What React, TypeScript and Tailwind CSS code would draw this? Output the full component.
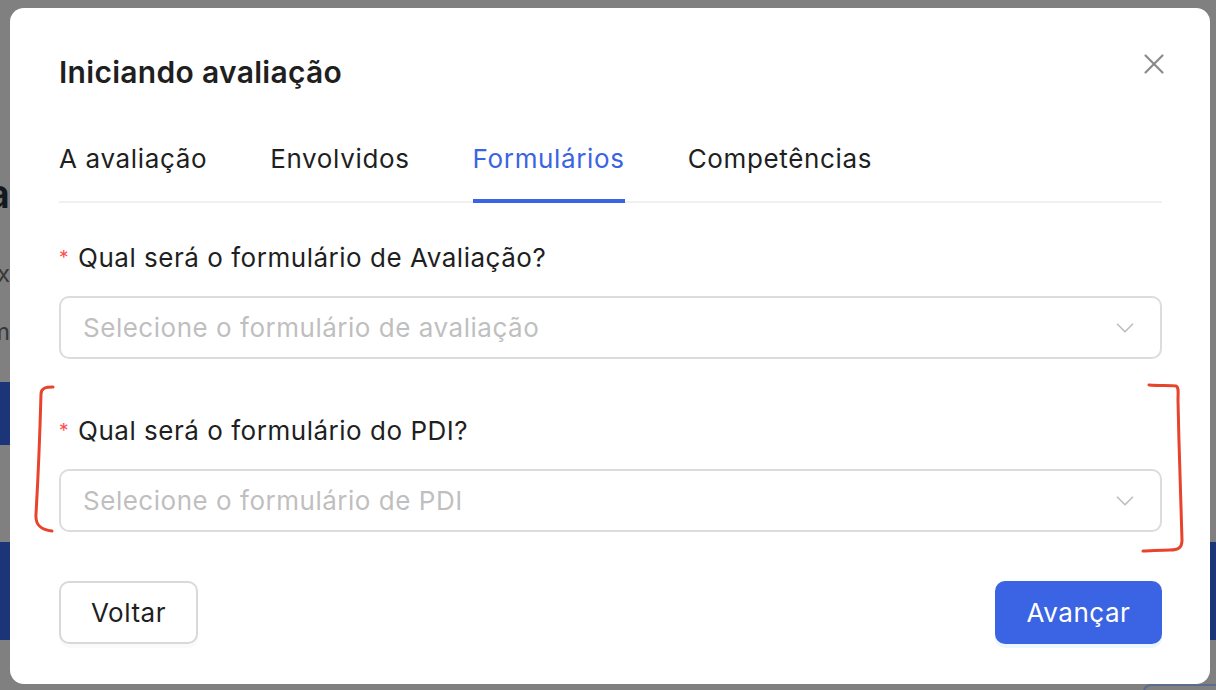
import { X, ChevronDown } from 'lucide-react';

const tabs = ['A avaliação', 'Envolvidos', 'Formulários', 'Competências'];

const Field = ({ label, placeholder }: { label: string; placeholder: string }) => (
  <div className="flex flex-col">
    <label className="flex items-center text-[26px] leading-[32px] tracking-[0.02em] text-[#1f1f1f]">
      <span className="mr-[9px] text-[19px] text-[#ff4d4f]">*</span>
      {label}
    </label>
    <div className="mt-[22px] flex h-[63px] items-center justify-between rounded-[10px] border-2 border-[#dcdcdc] pl-[22px] pr-[20px]">
      <span className="text-[26px] tracking-[0.02em] text-[#bfbfbf]">{placeholder}</span>
      <ChevronDown className="h-[30px] w-[30px] text-[#bfbfbf]" strokeWidth={1.4} />
    </div>
  </div>
);

const App = () => {
  return (
    <div
      className="relative h-[690px] w-[1216px] overflow-hidden bg-[#808080]"
      style={{ fontFamily: 'Inter, "Noto Sans", sans-serif' }}
    >
      {/* page behind the overlay */}
      <div className="flex h-full flex-col">
        <div className="flex h-[44px] w-[10px] shrink-0 justify-end overflow-hidden mt-[172px]">
          <span className="whitespace-nowrap text-[40px] font-semibold leading-[44px] text-[#141821]">Sistema</span>
        </div>
        <div className="mt-[42px] flex h-[32px] w-[10px] shrink-0 justify-end overflow-hidden">
          <span className="whitespace-nowrap text-[24px] leading-[32px] text-[#383838]">Prefix</span>
        </div>
        <div className="mt-[26px] flex h-[32px] w-[10px] shrink-0 justify-end overflow-hidden">
          <span className="whitespace-nowrap text-[24px] leading-[32px] text-[#383838]">Em</span>
        </div>
        <div className="mt-[34px] h-[63px] w-[600px] shrink-0 bg-[#1c3478]" />
        <div className="mt-[97px] h-[98px] w-full shrink-0 bg-[#1c3478]" />
        <div className="mt-[44px] flex shrink-0 justify-end">
          <div className="h-[20px] w-[73px] rounded-tl-[8px] border-l-2 border-t-2 border-[#5a6c90]" />
        </div>
      </div>

      {/* modal */}
      <div className="absolute left-[10px] top-[8px] flex h-[676px] w-[1200px] flex-col rounded-[14px] bg-white pl-[49px] pr-[48px] pt-[46px]">
        <div className="flex h-[36px] items-center justify-between">
          <h1 className="text-[30px] font-semibold leading-[36px] tracking-[0.01em] text-[#1f1f1f]">Iniciando avaliação</h1>
          <X className="-mr-[9px] -mt-[16px] h-[34px] w-[34px] text-[#8a8a8a]" strokeWidth={1.5} />
        </div>

        <div className="mt-[53px] flex gap-[63px] border-b-2 border-[#f0f0f0]">
          {tabs.map((t, i) => (
            <div
              key={t}
              className={
                i === 2
                  ? '-mb-[2px] border-b-4 border-[#3b64e2] pb-[24px] text-[26px] leading-[32px] tracking-[0.025em] text-[#3b64e2]'
                  : '-mb-[2px] border-b-4 border-transparent pb-[24px] text-[26px] leading-[32px] tracking-[0.025em] text-[#1f1f1f]'
              }
            >
              {t}
            </div>
          ))}
        </div>

        <div className="mt-[39px]">
          <Field label="Qual será o formulário de Avaliação?" placeholder="Selecione o formulário de avaliação" />
        </div>
        <div className="mt-[56px]">
          <Field label="Qual será o formulário do PDI?" placeholder="Selecione o formulário de PDI" />
        </div>

        <div className="mt-[49px] flex items-center justify-between">
          <button className="h-[63px] w-[139px] rounded-[10px] border-2 border-[#d9d9d9] bg-white text-[26px] tracking-[0.02em] text-[#1f1f1f] shadow-[0_4px_0_rgba(0,0,0,0.02)]">
            Voltar
          </button>
          <button className="h-[63px] w-[167px] rounded-[10px] bg-[#3a64e3] text-[26px] tracking-[0.02em] text-white shadow-[0_4px_0_rgba(5,145,255,0.08)]">
            Avançar
          </button>
        </div>
      </div>

      {/* red annotation brackets */}
      <svg className="pointer-events-none absolute left-0 top-0" width="1216" height="690">
        <path
          d="M53 387 C46 387 41 388 41 394 C40 430 38 480 36 514 C35 526 42 530 52 531"
          fill="none"
          stroke="#e8432c"
          strokeWidth="3"
          strokeLinecap="round"
        />
        <path
          d="M1149 385 C1160 386 1170 385 1176 386 C1179 387 1178 392 1178 400 C1179 450 1181 510 1182 540 C1182 548 1178 550 1170 550 C1160 550 1150 551 1143 551"
          fill="none"
          stroke="#e8432c"
          strokeWidth="3"
          strokeLinecap="round"
        />
      </svg>
    </div>
  );
};

export default App;
